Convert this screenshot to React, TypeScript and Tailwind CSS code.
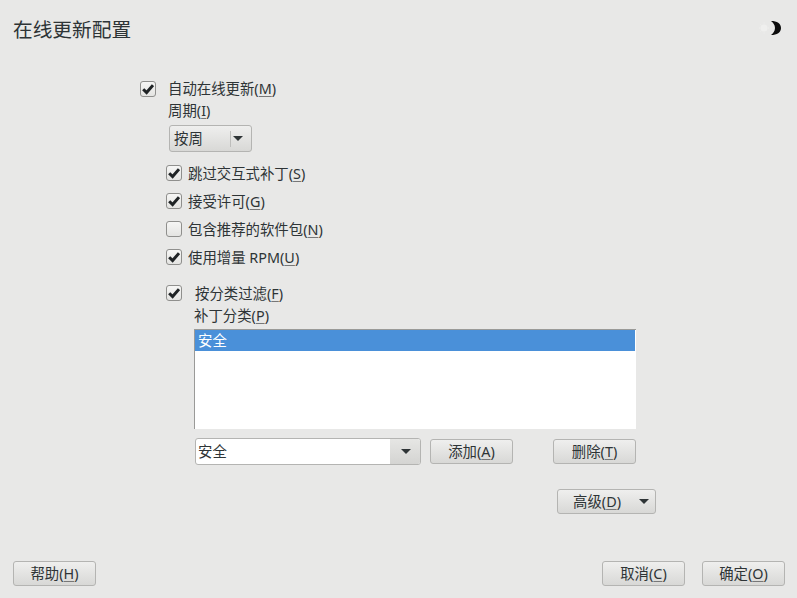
import type { ReactNode } from 'react';

const btnClass =
    'flex items-center justify-center h-[25px] rounded-[3px] border border-[#b4b4b2] bg-gradient-to-b from-[#efefee] to-[#d8d8d6] text-[#2e3436] text-[14.4px] leading-[19px]';

function Label({ text, mn, rest = '' }: { text: string; mn: string; rest?: string }) {
    return (
        <span className="whitespace-nowrap">
            {text}(<span className="underline underline-offset-2 decoration-[#777]">{mn}</span>){rest}
        </span>
    );
}

function Arrow() {
    return (
        <svg width="10" height="5" viewBox="0 0 10 5" className="shrink-0">
            <path d="M0 0h10L5 5z" fill="#2e3436" />
        </svg>
    );
}

function Check({ checked = true }: { checked?: boolean }) {
    return (
        <span className="flex items-center justify-center w-[16px] h-[16px] shrink-0 rounded-[3px] border border-[#8f8f8d] bg-gradient-to-b from-[#f6f6f5] to-[#e4e4e2]">
            {checked && (
                <svg width="12" height="11" viewBox="0 0 12 11">
                    <path d="M1.2 5.2L4.6 8.6L11 1.2" fill="none" stroke="#1f2325" strokeWidth="3" />
                </svg>
            )}
        </span>
    );
}

function CheckRow({ children, checked }: { children: ReactNode; checked?: boolean }) {
    return (
        <div className="flex items-center gap-[5px] h-[28px] pl-[26px]">
            <Check checked={checked} />
            <span className="pl-px">{children}</span>
        </div>
    );
}

function MoonIcon() {
    return (
        <svg width="24" height="20" viewBox="0 0 24 20" className="shrink-0 mb-[4px]">
            <circle cx="5" cy="10" r="3.5" fill="#efefee" />
            <path d="M0 10h1M9 10h1M5 4.5v1M5 14.5v1M1.5 6.5l1 1M1.5 13.5l1-1" stroke="#efefee" strokeWidth="1" />
            <path d="M12 3c6 0 10 2.5 10 7s-4 7-10 7c2-1.6 4-4 4-7s-2-5.4-4-7z" fill="#0c0c0c" />
        </svg>
    );
}

export default function App() {
    return (
        <div
            className="flex flex-col w-[797px] h-[598px] bg-[#e8e8e7] text-[#2e3436] text-[14.4px] overflow-hidden"
            style={{ fontFamily: '"Noto Sans", "Noto Sans CJK SC", sans-serif' }}
        >
            {/* Header */}
            <div className="flex items-center justify-between h-[60px] pl-[13px] pr-[14px]">
                <h1 className="text-[19.7px] font-normal leading-none">在线更新配置</h1>
                <MoonIcon />
            </div>

            {/* Content */}
            <div className="flex-1 pl-[140px] pt-[21px] leading-[19px]">
                <div className="flex items-center gap-[12px] h-[16px] leading-none">
                    <Check />
                    <Label text="自动在线更新" mn="M" />
                </div>
                <div className="flex items-center h-[20px] pl-[28px] mt-[4px] leading-none">
                    <Label text="周期" mn="I" />
                </div>
                <div className="mt-[4px] ml-[29px] flex items-center w-[83px] h-[27px] rounded-[3px] border border-[#b4b4b2] bg-gradient-to-b from-[#efefee] to-[#d8d8d6]">
                    <span className="pl-[4px] w-[60px]">按周</span>
                    <span className="w-px h-[16px] bg-[#bdbdbb]" />
                    <span className="pl-[2px]">
                        <Arrow />
                    </span>
                </div>

                <div className="mt-[7px]">
                    <CheckRow>
                        <Label text="跳过交互式补丁" mn="S" />
                    </CheckRow>
                    <CheckRow>
                        <Label text="接受许可" mn="G" />
                    </CheckRow>
                    <CheckRow checked={false}>
                        <Label text="包含推荐的软件包" mn="N" />
                    </CheckRow>
                    <CheckRow>
                        <Label text="使用增量 RPM" mn="U" />
                    </CheckRow>
                </div>

                <div className="flex items-center gap-[13px] h-[16px] mt-[14px] pl-[26px]">
                    <Check />
                    <Label text="按分类过滤" mn="F" />
                </div>
                <div className="flex items-center h-[20px] pl-[54px] mt-[4px]">
                    <Label text="补丁分类" mn="P" />
                </div>

                <div className="ml-[54px] mt-[4px] w-[442px] h-[100px] bg-white border-t border-l border-[#9a9a98]">
                    <div className="flex items-center h-[21px] pl-[3px] mr-px bg-[#4a90d9] text-white">安全</div>
                </div>

                <div className="flex items-center ml-[55px] mt-[9px]">
                    <div className="flex items-stretch w-[226px] h-[27px] rounded-[3px] border border-[#b4b4b2] bg-white overflow-hidden">
                        <span className="flex-1 flex items-center pl-[2px]">安全</span>
                        <span className="flex items-center justify-center w-[30px] pl-[2px] bg-gradient-to-b from-[#e6e6e4] to-[#d4d4d2]">
                            <Arrow />
                        </span>
                    </div>
                    <button className={`${btnClass} w-[83px] ml-[9px] border-[#8f8f8d]`}>
                        <Label text="添加" mn="A" />
                    </button>
                    <button className={`${btnClass} w-[83px] ml-[40px]`}>
                        <Label text="删除" mn="T" />
                    </button>
                </div>

                <div className="flex ml-[417px] mt-[24px]">
                    <button className={`${btnClass} w-[99px] pl-[15px] pr-[6px] !justify-between`}>
                        <Label text="高级" mn="D" />
                        <Arrow />
                    </button>
                </div>
            </div>

            {/* Footer */}
            <div className="flex items-center h-[25px] mb-[12px] pl-[13px] pr-[12px]">
                <button className={`${btnClass} w-[83px]`}>
                    <Label text="帮助" mn="H" />
                </button>
                <button className={`${btnClass} w-[83px] ml-auto`}>
                    <Label text="取消" mn="C" />
                </button>
                <button className={`${btnClass} w-[83px] ml-[17px]`}>
                    <Label text="确定" mn="O" />
                </button>
            </div>
        </div>
    );
}
